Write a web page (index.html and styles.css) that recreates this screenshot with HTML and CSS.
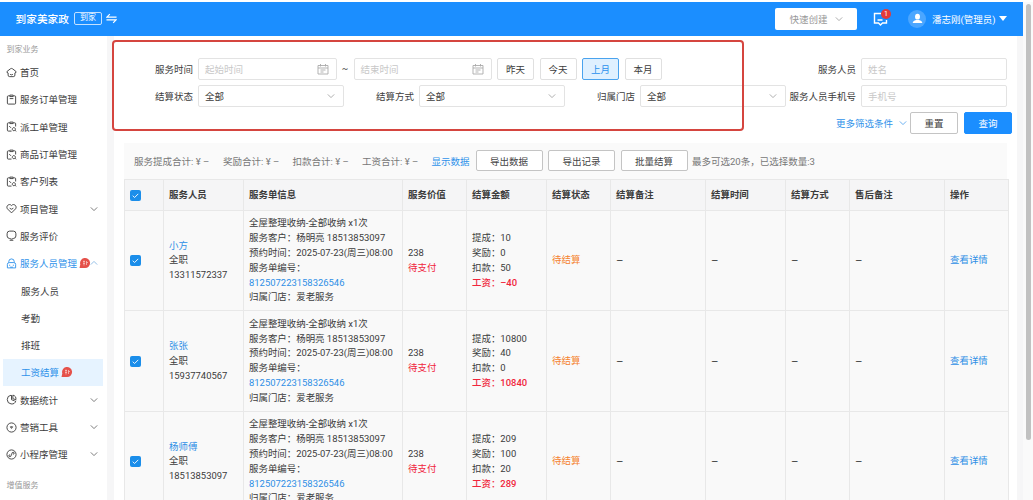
FILE: index.html
```
<!DOCTYPE html>
<html lang="zh-CN">
<head>
  <meta charset="UTF-8">
  <title>工资结算</title>
  <link rel="stylesheet" href="styles.css">
</head>

<body>
  <!-- shared icons -->
  <svg class="sprite">
    <symbol id="down" viewBox="0 0 10 10"><path d="M1 3l4 4 4-4"/></symbol>
    <symbol id="up" viewBox="0 0 10 10"><path d="M1 7l4-4 4 4"/></symbol>
    <symbol id="home" viewBox="0 0 12 12"><path d="M2.300 6.500Q.2 6 1.200 4.800L4.800 2q1.200-.9 2.400 0l3.600 2.800q1 1.200-1.100 1.700v2.300q0 1.700-1.700 1.700H4q-1.700 0-1.700-1.700zM4.500 8q1.500 1.200 3 0"/></symbol>
    <symbol id="order" viewBox="0 0 12 12"><path d="M4 2H2.500q-1 0-1 1v7q0 1 1 1h7q1 0 1-1V3q0-1-1-1H8M4.200 1.200h3.600v1.600H4.200zM4 5h4"/></symbol>
    <symbol id="dispatch" viewBox="0 0 12 12"><path d="M4 2H2.500q-1 0-1 1v7q0 1 1 1H6M8 2h1.500q1 0 1 1v3M4.200 1.200h3.600v1.600H4.200zM3.500 5.500l2 2M8.500 7.200a1.700 1.700 0 1 0 .1 0M10 10.200l1.200 1"/></symbol>
    <symbol id="heart" viewBox="0 0 12 12"><path d="M6 10.800L1.500 6.300C-.5 3.500 3.500-.2 6 2.800c2.500-3 6.500.7 4.500 3.500zM4 5.700q2 2.200 4 0"/></symbol>
    <symbol id="rate" viewBox="0 0 12 12"><path d="M4 1.200h4q2.800 0 2.800 2.800v2.500Q10.800 9 8 9.300L6 10 4 9.300Q1.200 9 1.200 6.500V4q0-2.800 2.800-2.800zM4 11.200h4"/></symbol>
    <symbol id="worker" viewBox="0 0 12 12"><path d="M3 5V4a3 3 0 0 1 6 0v1M1.500 10.800V7Q1.500 5 3.500 5h5q2 0 2 2v3.800zM4 7.300v1.200M8 7.300v1.200M4.500 10h3"/></symbol>
    <symbol id="chart" viewBox="0 0 12 12"><path d="M5.500 1.300a4.800 4.800 0 1 0 5.300 6M6 1.200v5l3.500 1.300M7.500 1.200a4.500 4.500 0 0 1 3.300 5l-3.300-1z"/></symbol>
    <symbol id="market" viewBox="0 0 12 12"><circle cx="6" cy="6" r="5"/><path d="M4.800 5.200h2.400L6 7z"/></symbol>
    <symbol id="mini" viewBox="0 0 12 12"><circle cx="6" cy="6" r="5"/><path d="M3.500 8.500q-1.300-2 1-2.300M8.500 3.500q1.300 2-1 2.300M3.500 8.500Q5.500 9 6 6t2.500-2.500"/></symbol>
    <symbol id="date" viewBox="0 0 12 12"><path d="M1 2.500h10v8.500H1zM3.500 1v2.500M8.500 1v2.500M1 5h10M3.500 7h5M3.500 9h3"/></symbol>
    <symbol id="tick" viewBox="0 0 12 12"><path d="M3 6.200l2 2 4-4"/></symbol>
    <symbol id="new" viewBox="0 0 12 12"><path class="new-bg" d="M.5 11l.8-3.500A5 5 0 1 1 6 11z"/><path class="new-line" d="M4 4.500h2M4 6.500h2M5 3.500v5M7.500 4v4M7.500 5.500h1.500"/></symbol>
  </svg>

  <div class="page">
    <div class="app">
      <header class="header">
        <span class="brand">到家美家政</span>
        <span class="brand-tag">到家</span>
        <svg class="swap" viewBox="0 0 12 12"><path d="M11.500 4.500H1L4.200 1.300M.5 7.500H11L7.800 10.700"/></svg>
        <button class="create">快速创建 <svg class="chevron"><use href="#down"/></svg></button>
        <div class="message">
          <svg viewBox="0 0 16 14"><path d="M8 1.500H1.500v9.500h4l2 2 2-2h4V8M4.500 8h5"/></svg>
          <span class="badge">1</span>
        </div>
        <div class="avatar"><svg viewBox="0 0 12 12"><ellipse cx="6" cy="4" rx="2.700" ry="3.200"/><path d="M.8 11q0-2.500 3.700-3.400h3q3.700.9 3.700 3.400z"/></svg></div>
        <span class="user">潘志刚(管理员)</span>
        <span class="caret"></span>
      </header>

      <div class="body">
        <nav class="sidebar">
          <div class="group">到家业务</div>
          <a class="item"><svg class="icon"><use href="#home"/></svg>首页</a>
          <a class="item"><svg class="icon"><use href="#order"/></svg>服务订单管理</a>
          <a class="item"><svg class="icon"><use href="#dispatch"/></svg>派工单管理</a>
          <a class="item"><svg class="icon"><use href="#dispatch"/></svg>商品订单管理</a>
          <a class="item"><svg class="icon"><use href="#dispatch"/></svg>客户列表</a>
          <a class="item"><svg class="icon"><use href="#heart"/></svg>项目管理<svg class="chevron fold"><use href="#down"/></svg></a>
          <a class="item"><svg class="icon"><use href="#rate"/></svg>服务评价</a>
          <a class="item open"><svg class="icon"><use href="#worker"/></svg>服务人员管理<svg class="new"><use href="#new"/></svg><svg class="chevron fold"><use href="#up"/></svg></a>
          <a class="item sub">服务人员</a>
          <a class="item sub">考勤</a>
          <a class="item sub">排班</a>
          <a class="item sub active">工资结算<svg class="new"><use href="#new"/></svg></a>
          <a class="item"><svg class="icon"><use href="#chart"/></svg>数据统计<svg class="chevron fold"><use href="#down"/></svg></a>
          <a class="item"><svg class="icon"><use href="#market"/></svg>营销工具<svg class="chevron fold"><use href="#down"/></svg></a>
          <a class="item"><svg class="icon"><use href="#mini"/></svg>小程序管理<svg class="chevron fold"><use href="#down"/></svg></a>
          <div class="group last">增值服务</div>
        </nav>

        <main class="main">
          <div class="filters">
            <div class="filter-row">
              <label class="label">服务时间</label>
              <div class="field date">起始时间<svg class="cal"><use href="#date"/></svg></div>
              <span class="to">~</span>
              <div class="field date">结束时间<svg class="cal"><use href="#date"/></svg></div>
              <div class="days">
                <button class="day">昨天</button>
                <button class="day">今天</button>
                <button class="day on">上月</button>
                <button class="day">本月</button>
              </div>
              <label class="label right">服务人员</label>
              <div class="field">姓名</div>
            </div>
            <div class="filter-row">
              <label class="label">结算状态</label>
              <div class="field select">全部<svg class="chevron"><use href="#down"/></svg></div>
              <label class="label mid">结算方式</label>
              <div class="field select">全部<svg class="chevron"><use href="#down"/></svg></div>
              <label class="label mid">归属门店</label>
              <div class="field select">全部<svg class="chevron"><use href="#down"/></svg></div>
              <label class="label right">服务人员手机号</label>
              <div class="field">手机号</div>
            </div>
            <div class="filter-row actions">
              <a class="more">更多筛选条件 <svg class="chevron"><use href="#down"/></svg></a>
              <button class="btn reset">重置</button>
              <button class="btn query">查询</button>
            </div>
          </div>

          <div class="toolbar">
            <span class="sum first">服务提成合计: ¥ –</span>
            <span class="sum">奖励合计: ¥ –</span>
            <span class="sum">扣款合计: ¥ –</span>
            <span class="sum">工资合计: ¥ –</span>
            <a class="show">显示数据</a>
            <button class="btn">导出数据</button>
            <button class="btn">导出记录</button>
            <button class="btn">批量结算</button>
            <span class="tip">最多可选20条，已选择数量:3</span>
          </div>

          <table class="table">
            <colgroup>
              <col class="c-check"><col class="c-80"><col class="c-info"><col class="c-64"><col class="c-80"><col class="c-64">
              <col class="c-95"><col class="c-80"><col class="c-64"><col class="c-95"><col class="c-64">
            </colgroup>
            <thead>
              <tr>
                <th><svg class="check"><use href="#tick"/></svg></th>
                <th>服务人员</th>
                <th>服务单信息</th>
                <th>服务价值</th>
                <th>结算金额</th>
                <th>结算状态</th>
                <th>结算备注</th>
                <th>结算时间</th>
                <th>结算方式</th>
                <th>售后备注</th>
                <th>操作</th>
              </tr>
            </thead>
            <tbody>
              <tr>
                <td><svg class="check"><use href="#tick"/></svg></td>
                <td><a>小方</a><br>全职<br>13311572337</td>
                <td>全屋整理收纳-全部收纳 x1次<br>服务客户：杨明亮 18513853097<br>预约时间：2025-07-23(周三)08:00<br>服务单编号：<br><a>812507223158326546</a><br>归属门店：爱老服务</td>
                <td>238<br><span class="red">待支付</span></td>
                <td>提成：10<br>奖励：0<br>扣款：50<br><span class="red pay">工资：–40</span></td>
                <td><span class="orange">待结算</span></td>
                <td class="none">–</td>
                <td class="none">–</td>
                <td class="none">–</td>
                <td class="none">–</td>
                <td><a>查看详情</a></td>
              </tr>
              <tr>
                <td><svg class="check"><use href="#tick"/></svg></td>
                <td><a>张张</a><br>全职<br>15937740567</td>
                <td>全屋整理收纳-全部收纳 x1次<br>服务客户：杨明亮 18513853097<br>预约时间：2025-07-23(周三)08:00<br>服务单编号：<br><a>812507223158326546</a><br>归属门店：爱老服务</td>
                <td>238<br><span class="red">待支付</span></td>
                <td>提成：10800<br>奖励：40<br>扣款：0<br><span class="red pay">工资：10840</span></td>
                <td><span class="orange">待结算</span></td>
                <td class="none">–</td>
                <td class="none">–</td>
                <td class="none">–</td>
                <td class="none">–</td>
                <td><a>查看详情</a></td>
              </tr>
              <tr>
                <td><svg class="check"><use href="#tick"/></svg></td>
                <td><a>杨师傅</a><br>全职<br>18513853097</td>
                <td>全屋整理收纳-全部收纳 x1次<br>服务客户：杨明亮 18513853097<br>预约时间：2025-07-23(周三)08:00<br>服务单编号：<br><a>812507223158326546</a><br>归属门店：爱老服务</td>
                <td>238<br><span class="red">待支付</span></td>
                <td>提成：209<br>奖励：100<br>扣款：20<br><span class="red pay">工资：289</span></td>
                <td><span class="orange">待结算</span></td>
                <td class="none">–</td>
                <td class="none">–</td>
                <td class="none">–</td>
                <td class="none">–</td>
                <td><a>查看详情</a></td>
              </tr>
            </tbody>
          </table>
        </main>
      </div>
    </div>
    <div class="scroll"><div class="thumb"></div></div>
    <div class="highlight"></div>
  </div>
</body>
</html>
```
FILE: styles.css
```
*
{
  box-sizing: border-box;
}

body
{
  margin: 0;
  height: 500px;
  overflow: hidden;
  font-family: Roboto, "Noto Sans CJK SC", sans-serif;
  font-size: 9.5px;
  color: #3c3c3c;
  background-color: #fff;
}

button
{
  font: inherit;
  color: inherit;
  padding: 0;
}

svg
{
  fill: none;
  stroke: currentColor;
  flex-shrink: 0;
}

.sprite
{
  display: none;
}

.page
{
  display: flex;
  height: 500px;
  padding-top: 2px;
  position: relative;
}

.app
{
  width: 1023px;
}

/* header */
.header
{
  height: 34px;
  padding: 0 16px 1px 15.500px;
  display: flex;
  align-items: center;
  background-color: #1b8eff;
  color: #fff;
}

.brand
{
  font-size: 10.7px;
  font-weight: 500;
}

.brand-tag
{
  width: 28px;
  height: 13px;
  margin: 0 4px 0 5px;
  border: 1px solid #c4e1ff;
  border-radius: 2px;
  font-size: 8px;
  line-height: 10px;
  text-align: center;
}

.swap
{
  width: 11px;
  height: 11px;
  stroke-width: 1.3;
}

.create
{
  width: 82px;
  height: 22px;
  margin-left: auto;
  display: flex;
  justify-content: center;
  align-items: center;
  gap: 7px;
  border: none;
  border-radius: 2px;
  background-color: #fff;
  color: #999;
}

.chevron
{
  width: 8px;
  height: 8px;
  stroke-width: 1.2;
  color: #aaa;
}

.message
{
  width: 16px;
  height: 14px;
  margin-left: 16px;
  position: relative;
}

.message svg
{
  width: 16px;
  height: 14px;
  stroke-width: 1.4;
}

.badge
{
  position: absolute;
  left: 8px;
  top: -3px;
  width: 10px;
  height: 10px;
  border-radius: 5px;
  background-color: #e33a3a;
  font-size: 7px;
  line-height: 10px;
  text-align: center;
}

.avatar
{
  width: 18px;
  height: 18px;
  margin-left: 19px;
  display: flex;
  justify-content: center;
  align-items: center;
  border-radius: 9px;
  background-color: #4ba6ff;
}

.avatar svg
{
  width: 11px;
  height: 11px;
  fill: #fff;
  stroke: none;
}

.user
{
  margin-left: 6px;
  width: 64px;
  white-space: nowrap;
}

.caret
{
  margin-left: 3px;
  border: 4px solid transparent;
  border-top: 5px solid #fff;
  border-bottom: none;
}

.body
{
  display: flex;
  height: 464px;
  background-color: #f6f6f7;
}

/* sidebar */
.sidebar
{
  width: 107px;
  padding-top: 4px;
  background-color: #fff;
}

.group
{
  height: 18.500px;
  padding-left: 6.500px;
  font-size: 8px;
  line-height: 19.500px;
  color: #999;
}

.last
{
  margin-top: 8px;
}

.item
{
  height: 27.300px;
  padding: 0 9px 0 6px;
  display: flex;
  align-items: center;
}

.icon
{
  width: 11px;
  height: 11px;
  margin-right: 3px;
  stroke-width: 1;
}

.fold
{
  margin-left: auto;
  color: #777;
}

.open, .active
{
  color: #2f92ea;
}

.open .fold
{
  margin-left: -1px;
  color: #91bde6;
}

.sub
{
  padding-left: 21px;
}

.active
{
  margin: 0 4px 0 3px;
  padding-left: 18px;
  background-color: #e6f3ff;
}

.new
{
  width: 12px;
  height: 12px;
  margin-left: 2px;
}

.new-bg
{
  fill: #e5514a;
  stroke: none;
}

.new-line
{
  stroke: #fbd0cc;
  stroke-width: .7;
}

/* filters */
.main
{
  width: 903px;
  margin-left: 7px;
  padding: 0 10px;
  background-color: #fff;
}

.filters
{
  height: 107px;
  padding-top: 21.500px;
  display: flex;
  flex-direction: column;
  gap: 5px;
}

.filter-row
{
  height: 22px;
  display: flex;
  align-items: center;
}

.label
{
  width: 69px;
  margin-right: 5px;
  text-align: right;
  white-space: nowrap;
}

.mid
{
  width: 70px;
}

.right
{
  margin-left: auto;
}

.field
{
  width: 146px;
  height: 22px;
  padding: 0 8px 0 6px;
  display: flex;
  justify-content: space-between;
  align-items: center;
  border: 1px solid #e3e3e3;
  border-radius: 2px;
  color: #c8c8c8;
}

.select
{
  color: #3c3c3c;
}

.date
{
  width: 138.500px;
  padding-right: 7px;
}

.cal
{
  width: 12px;
  height: 12px;
  color: #aaa;
  stroke-width: .9;
}

.to
{
  width: 17px;
  text-align: center;
}

.days
{
  display: flex;
  gap: 5.500px;
  margin-left: 5px;
}

.day
{
  width: 37px;
  height: 22px;
  border: 1px solid #e0e0e0;
  border-radius: 2px;
  background-color: #fff;
}

.on
{
  border-color: #4aa3ee;
  background-color: #dff0ff;
  color: #2b91ed;
}

.actions
{
  justify-content: flex-end;
  margin-right: -5px;
}

.more
{
  display: flex;
  align-items: center;
  gap: 6px;
  margin-right: 3px;
  color: #2f92ea;
}

.more .chevron
{
  color: #65aef0;
}

.btn
{
  width: 67px;
  height: 21px;
  border: 1px solid #c4c4c4;
  border-radius: 2px;
  background-color: #fff;
}

.reset, .query
{
  width: 48px;
  height: 22px;
}

.query
{
  margin-left: 6px;
  border-color: #1b8eff;
  background-color: #1b8eff;
  color: #fff;
}

/* summary line over the table */
.toolbar
{
  height: 36px;
  padding: 0 0 1px 10px;
  display: flex;
  align-items: center;
  background-color: #fafafa;
  color: #777;
  white-space: nowrap;
}

.sum
{
  width: 69.500px;
}

.first
{
  width: 89px;
}

.show
{
  width: 44px;
  color: #2f92ea;
}

.toolbar .btn
{
  margin-right: 5.500px;
  color: #444;
}

.toolbar .tip
{
  margin-left: -1px;
}

/* table */
.table
{
  width: 884px;
  table-layout: fixed;
  border-collapse: collapse;
  font-size: 9.45px;
  line-height: 14.800px;
}

.c-check { width: 39px; }
.c-64 { width: 64px; }
.c-80 { width: 80px; }
.c-95 { width: 95px; }
.c-info { width: 159px; }

.table th, .table td
{
  height: 100.500px;
  padding: 1px 0 0 5px;
  border: 1px solid #e8e8e8;
  background-color: #f9f9f9;
  text-align: left;
  white-space: nowrap;
}

.table th
{
  height: 30.500px;
  background-color: #f5f5f6;
  font-weight: 700;
}

.table a
{
  color: #2f8fe6;
}

.table .none
{
  font-size: 11.5px;
}

.check
{
  display: block;
  width: 11px;
  height: 11px;
  border-radius: 2px;
  background-color: #1b8eea;
  color: #fff;
}

.red
{
  color: #f0263c;
}

.pay
{
  font-weight: 500;
}

.orange
{
  color: #f5822e;
}

/* page scrollbar */
.scroll
{
  width: 10px;
  padding: 2px 2px 0 3px;
  background-color: #fafafa;
}

.thumb
{
  height: 436px;
  border-radius: 3px;
  background-color: #c1c1c1;
}

/* frame laid over the filter area */
.highlight
{
  position: absolute;
  left: 112px;
  top: 40px;
  width: 632px;
  height: 91px;
  border: 2.500px solid #d5453f;
  border-radius: 4px;
}
```
